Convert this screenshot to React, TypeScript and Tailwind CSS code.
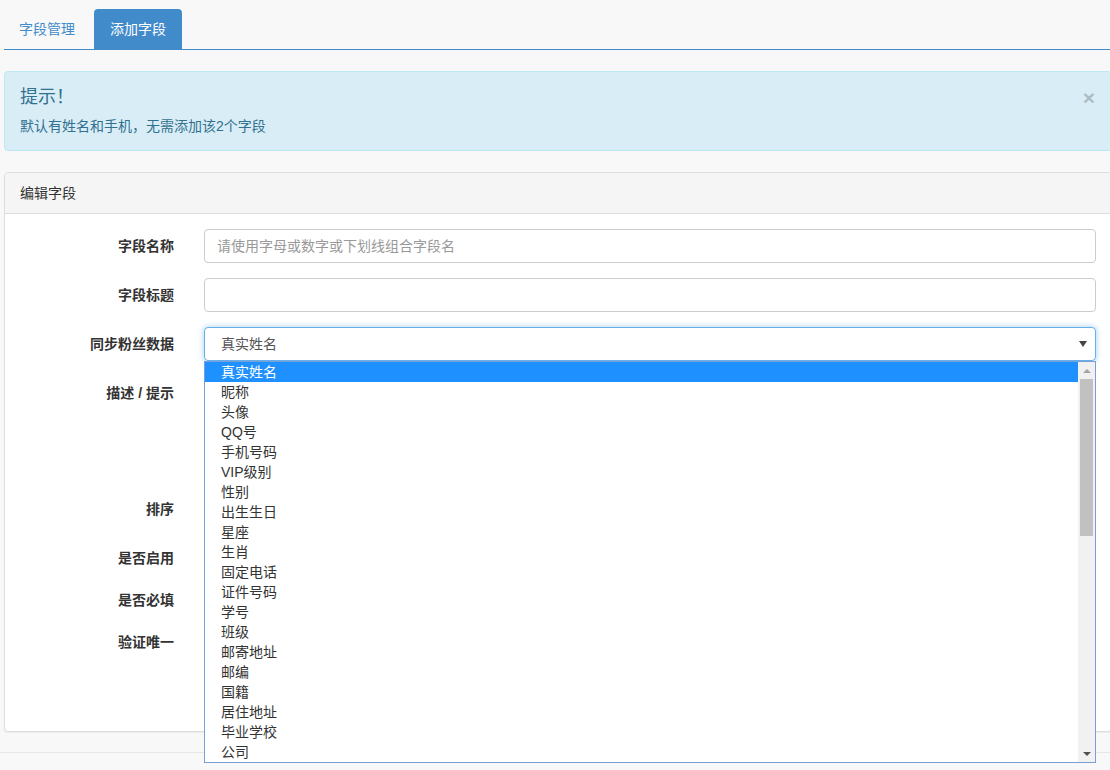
import React from "react";

const options = [
  "真实姓名",
  "昵称",
  "头像",
  "QQ号",
  "手机号码",
  "VIP级别",
  "性别",
  "出生生日",
  "星座",
  "生肖",
  "固定电话",
  "证件号码",
  "学号",
  "班级",
  "邮寄地址",
  "邮编",
  "国籍",
  "居住地址",
  "毕业学校",
  "公司",
];

function Label({ children }: { children: React.ReactNode }) {
  return (
    <div className="pr-[15px] pt-[7px] text-right text-[14px] font-bold leading-5 text-[#333]">
      {children}
    </div>
  );
}

function Row({ label, children }: { label?: string; children: React.ReactNode }) {
  return (
    <div className="mb-[15px] grid grid-cols-[184px_1fr]">
      {label ? <Label>{label}</Label> : <div />}
      <div className="pl-[15px] pr-[15px]">{children}</div>
    </div>
  );
}

function TextInput({ placeholder }: { placeholder?: string }) {
  return (
    <input
      type="text"
      placeholder={placeholder}
      className="block h-[34px] w-full rounded-[4px] border border-[#ccc] bg-white px-[12px] text-[14px] text-[#555] outline-none placeholder:text-[#999]"
    />
  );
}

function SelectOpen() {
  return (
    <div className="relative">
      <div className="flex h-[34px] items-center justify-between rounded-[4px] border border-[#66afe9] bg-white pl-[16px] pr-[8px] text-[14px] text-[#555] shadow-[0_0_6px_rgba(102,175,233,0.6)]">
        <span>真实姓名</span>
        <span className="h-0 w-0 border-x-[4px] border-t-[6px] border-x-transparent border-t-[#444]" />
      </div>
      <div className="absolute left-0 right-0 top-[34px] z-10 flex h-[402px] border border-[#7a9fd8] bg-white">
        <ul className="flex-1 overflow-hidden">
          {options.map((option, index) => (
            <li
              key={option}
              className={
                index === 0
                  ? "h-[20px] bg-[#1e90ff] pl-[16px] text-[14px] leading-[20px] text-white"
                  : "h-[20px] pl-[16px] text-[14px] leading-[20px] text-[#333]"
              }
            >
              {option}
            </li>
          ))}
        </ul>
        <div className="flex w-[17px] flex-col items-center bg-[#f1f1f1]">
          <div className="flex h-[17px] w-full items-center justify-center">
            <span className="h-0 w-0 border-x-[4px] border-b-[4px] border-x-transparent border-b-[#a3a3a3]" />
          </div>
          <div className="h-[157px] w-[13px] bg-[#c1c1c1]" />
          <div className="flex-1" />
          <div className="flex h-[17px] w-full items-center justify-center">
            <span className="h-0 w-0 border-x-[4px] border-t-[4px] border-x-transparent border-t-[#505050]" />
          </div>
        </div>
      </div>
    </div>
  );
}

// radio group sits under the open dropdown, so only its height matters
function Radios() {
  return (
    <div className="flex h-[27px] items-center gap-4 pt-[7px]">
      <input type="radio" defaultChecked />
      <input type="radio" />
    </div>
  );
}

export default function App() {
  return (
    <div
      className="h-[770px] w-[1110px] overflow-hidden bg-[#f8f8f8] text-[14px] text-[#333]"
      style={{ fontFamily: '"Liberation Sans", "Noto Sans CJK SC", sans-serif' }}
    >
      <div className="w-[1112px] pl-[4px]">
        <div className="flex h-[49px] items-end">
          <div className="mr-[4px] px-[15px] py-[10px] leading-5 text-[#428bca]">字段管理</div>
          <div className="rounded-t-[4px] bg-[#428bca] px-[16px] py-[10px] leading-5 text-white">
            添加字段
          </div>
        </div>
        <div className="h-[1px] bg-[#428bca]" />

        <div className="mt-[21px] flex h-[80px] justify-between rounded-[4px] border border-[#bce8f1] bg-[#d9edf7] px-[15px] pt-[15px] text-[#31708f]">
          <div>
            <h4 className="text-[18px] leading-5">提示！</h4>
            <p className="mt-[9px] leading-5">默认有姓名和手机，无需添加该2个字段</p>
          </div>
          <button className="mr-[1px] mt-[1px] h-[20px] text-[21px] font-bold leading-5 text-black opacity-20">
            ×
          </button>
        </div>

        <div className="mt-[21px] rounded-[4px] border border-[#ddd] bg-white shadow-[0_1px_1px_rgba(0,0,0,0.05)]">
          <div className="rounded-t-[4px] border-b border-[#ddd] bg-[#f5f5f5] px-[15px] py-[10px] leading-5 text-[#333]">
            编辑字段
          </div>
          <div className="pb-[15px] pt-[15px]">
            <Row label="字段名称">
              <TextInput placeholder="请使用字母或数字或下划线组合字段名" />
            </Row>
            <Row label="字段标题">
              <TextInput />
            </Row>
            <Row label="同步粉丝数据">
              <SelectOpen />
            </Row>
            <Row label="描述 / 提示">
              <textarea className="block h-[101px] w-full resize-none rounded-[4px] border border-[#ccc] px-[12px] py-[6px]" />
            </Row>
            <Row label="排序">
              <TextInput />
            </Row>
            <Row label="是否启用">
              <Radios />
            </Row>
            <Row label="是否必填">
              <Radios />
            </Row>
            <Row label="验证唯一">
              <Radios />
            </Row>
            <Row>
              <div className="h-[34px] w-[60px] rounded-[4px] bg-[#428bca]" />
            </Row>
          </div>
        </div>
      </div>
      <div className="mt-[20px] border-t border-[#e7e7e7]" />
    </div>
  );
}
